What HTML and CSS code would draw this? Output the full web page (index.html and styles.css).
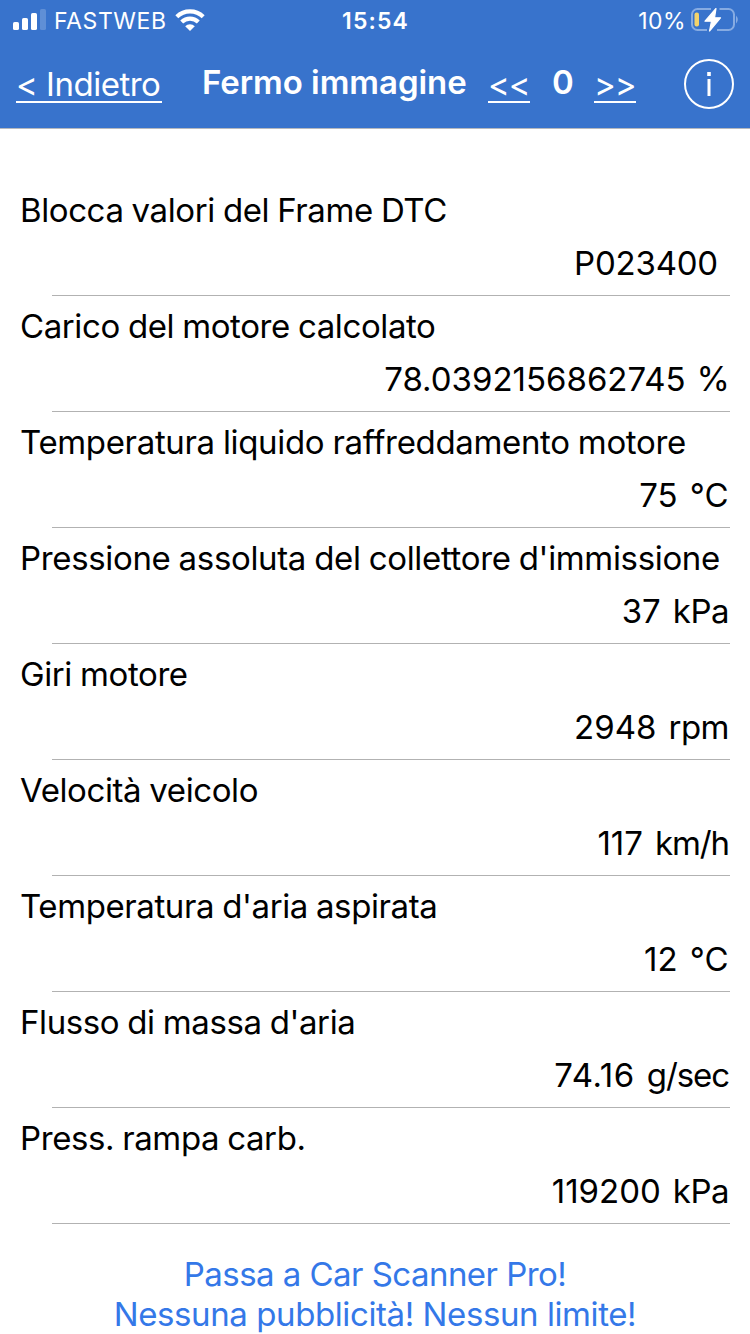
FILE: index.html
```
<!DOCTYPE html>
<html lang="it">
<head>
  <meta charset="UTF-8">
  <title>Fermo immagine</title>
  <link rel="stylesheet" href="styles.css">
</head>
<body>
  <header>
    <div class="status-bar">
      <div class="status-left">
        <svg class="signal" width="34" height="22" viewBox="0 0 34 22" fill="#fff">
          <rect x="0" y="13" width="6" height="8" rx="1.6"/>
          <rect x="9" y="9" width="6" height="12" rx="1.6"/>
          <rect x="18" y="4" width="6" height="17" rx="1.6"/>
          <rect x="27" y="0" width="6" height="21" rx="1.6" opacity="0.2"/>
        </svg>
        <span class="carrier">FASTWEB</span>
        <svg class="wifi" width="30" height="22" viewBox="0 0 30 22" fill="none" stroke="#fff" stroke-width="4.2">
          <path d="M1.8 7.7 A19 19 0 0 1 28.2 7.7"/>
          <path d="M6.7 12.9 A12 12 0 0 1 23.3 12.9"/>
          <path d="M15 22 L10.2 17.2 A6.8 6.8 0 0 1 19.8 17.2 Z" fill="#fff" stroke="none"/>
        </svg>
      </div>
      <div class="time">15:54</div>
      <div class="status-right">
        <span class="percent">10%</span>
        <svg class="battery" width="50" height="26" viewBox="0 0 50 26">
          <path d="M21 2 H7.5 A5.5 5.5 0 0 0 2 7.5 V17.5 A5.5 5.5 0 0 0 7.5 23 H17 M27 23 H38.5 A5.5 5.5 0 0 0 44 17.5 V7.5 A5.5 5.5 0 0 0 38.5 2 H29.5" fill="none" stroke="#86abe2" stroke-width="2"/>
          <path d="M46 8.5 Q49.5 12.5 46 16.5 Z" fill="#86abe2"/>
          <rect x="4.5" y="5.5" width="4.5" height="14" rx="2" fill="#f3d36b"/>
          <path d="M26 1.5 L15 14.2 H21.500 L19.5 24 L30.500 10.800 H24.500 Z" fill="#fff" stroke="#fff" stroke-width="1.2" stroke-linejoin="round"/>
        </svg>
      </div>
    </div>
    <nav>
      <a class="nav-link back">&lt; Indietro</a>
      <h1>Fermo immagine</h1>
      <a class="nav-link prev">&lt;&lt;</a>
      <span class="frame">0</span>
      <a class="nav-link next">&gt;&gt;</a>
      <svg class="info" width="52" height="52" viewBox="0 0 52 52">
        <circle cx="26" cy="26" r="24" fill="none" stroke="#fff" stroke-width="2"/>
        <rect x="24.2" y="14" width="3.6" height="4" fill="#fff"/>
        <rect x="24.5" y="21" width="3" height="17" fill="#fff"/>
      </svg>
    </nav>
  </header>

  <main>
    <div class="row">
      <div class="label">Blocca valori del Frame DTC</div>
      <div class="value code"><span>P023400</span><span class="unit"></span></div>
    </div>
    <div class="row">
      <div class="label">Carico del motore calcolato</div>
      <div class="value"><span>78.0392156862745</span><span class="unit percent-sign">%</span></div>
    </div>
    <div class="row">
      <div class="label long">Temperatura liquido raffreddamento motore</div>
      <div class="value"><span>75</span><span class="unit degrees">°C</span></div>
    </div>
    <div class="row">
      <div class="label long">Pressione assoluta del collettore d'immissione</div>
      <div class="value"><span>37</span><span class="unit">kPa</span></div>
    </div>
    <div class="row">
      <div class="label">Giri motore</div>
      <div class="value"><span>2948</span><span class="unit">rpm</span></div>
    </div>
    <div class="row">
      <div class="label">Velocità veicolo</div>
      <div class="value"><span>117</span><span class="unit ratio">km/h</span></div>
    </div>
    <div class="row">
      <div class="label">Temperatura d'aria aspirata</div>
      <div class="value"><span>12</span><span class="unit degrees">°C</span></div>
    </div>
    <div class="row">
      <div class="label">Flusso di massa d'aria</div>
      <div class="value wide"><span>74.16</span><span class="unit ratio">g/sec</span></div>
    </div>
    <div class="row">
      <div class="label">Press. rampa carb.</div>
      <div class="value"><span>119200</span><span class="unit">kPa</span></div>
    </div>
  </main>

  <footer>
    <div class="promo">Passa a Car Scanner Pro!</div>
    <div class="promo promo-wide">Nessuna pubblicità! Nessun limite!</div>
  </footer>
</body>
</html>
```
FILE: styles.css
```
* { box-sizing: border-box; }
body {
  margin: 0;
  height: 1334px;
  overflow: hidden;
  background: #fff;
  color: #000;
  font-family: Inter, "Liberation Sans", sans-serif;
  font-size: 33px;
  line-height: 40px;
}

header {
  height: 129px;
  background: #3873cc;
  border-bottom: 1px solid #b5b8be;
  color: #fff;
}
.status-bar {
  display: grid;
  grid-template-columns: 1fr auto 1fr;
  height: 40px;
  padding: 0 10px 0 13px;
  font-size: 23px;
  line-height: 42px;
}
.status-left, .status-right {
  display: flex;
  align-items: center;
  height: 40px;
}
.status-right { justify-content: flex-end; }
.carrier {
  padding-top: 2px;
  margin-left: 7px;
  letter-spacing: 0.6px;
}
.wifi { margin-left: 8px; }
.percent {
  padding-top: 2px;
  margin-right: 4px;
  letter-spacing: 0.4px;
}
.time {
  margin: 0 1px 0 -1px;
  font-weight: 600;
  letter-spacing: 1.1px;
}

nav {
  display: flex;
  align-items: center;
  height: 88px;
  padding: 0 15px 0 16px;
}
.nav-link {
  height: 38px;
  border-bottom: 2px solid #fff;
  line-height: 39px;
  white-space: nowrap;
}
.back {
  width: 146px;
  letter-spacing: -0.5px;
}
h1 {
  width: 266px;
  margin: 0 0 4px 40px;
  font-size: 33px;
  font-weight: 600;
  letter-spacing: -0.05px;
  white-space: nowrap;
}
.prev { width: 42px; margin-left: 20px; }
.frame {
  width: 22px;
  margin: 0 20px 4px 22px;
  font-weight: 600;
}
.next { width: 42px; }
.prev, .next { letter-spacing: -1px; }
.info { margin-left: auto; }

main { padding-top: 51px; }
.row {
  position: relative;
  height: 116px;
  padding: 10px 20px 0;
  white-space: nowrap;
}
.row::after {
  content: "";
  position: absolute;
  left: 52px;
  right: 20px;
  bottom: 0;
  height: 1px;
  background: #b2b2b2;
}
.label {
  letter-spacing: -0.4px;
  word-spacing: -0.8px;
}
.label.long { letter-spacing: -0.34px; }
.value {
  display: flex;
  justify-content: flex-end;
  margin-top: 13px;
}
.code { letter-spacing: -0.2px; }
.unit {
  margin: 0 1px 0 12px;
  letter-spacing: -0.5px;
}
.code .unit { margin-right: 0; }
.percent-sign {
  margin: 0 0 0 11px;
  font-size: 34px;
  letter-spacing: 0;
}
.degrees { letter-spacing: 0.3px; }
.ratio { letter-spacing: -1.1px; }
.wide { letter-spacing: 0.6px; }

footer {
  padding-top: 30px;
  color: #3478e8;
  text-align: center;
}
.promo { letter-spacing: -0.54px; }
.promo-wide { letter-spacing: -0.41px; }
```
